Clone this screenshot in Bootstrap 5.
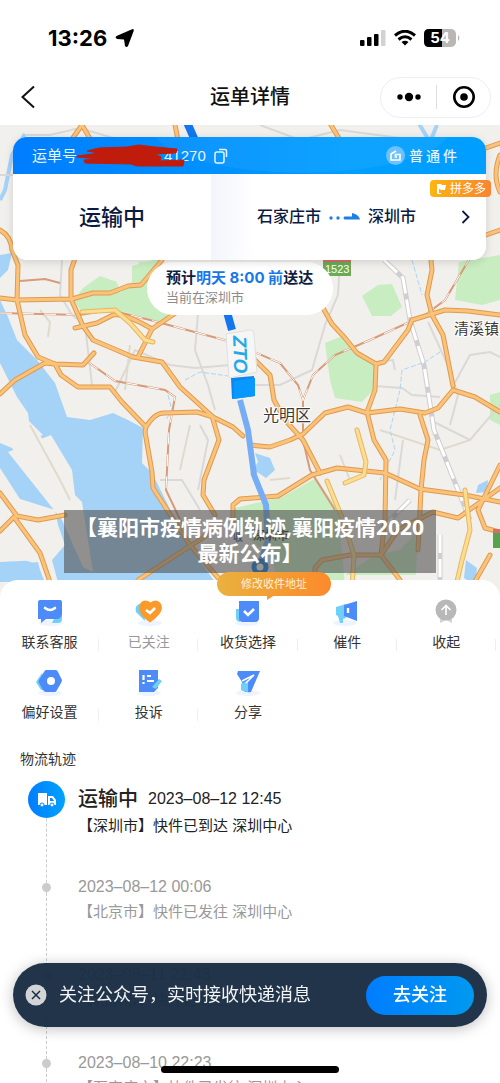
<!DOCTYPE html>
<html lang="zh-CN">
<head>
<meta charset="utf-8">
<meta name="viewport" content="width=device-width, initial-scale=1">
<title>运单详情</title>
<link href="https://cdn.jsdelivr.net/npm/bootstrap@5.3.0/dist/css/bootstrap.min.css" rel="stylesheet">
<style>
  body { font-family: "Liberation Sans", "Noto Sans CJK SC", sans-serif; color: #333; background: #fff; }
  svg { display: block; flex-shrink: 0; }
  .statusbar { height: 75px; padding: 0 40px 0 48px; }
  .clock { font: 700 22px/24px Inter, sans-serif; color: #000; }
  .navtop { height: 50px; padding: 0 9px 6px 20px; }
  .navtop h1 { font-size: 20px; line-height: 28px; font-weight: 500; color: #111; }
  .capsule { width: 111px; height: 41px; border: 1px solid #eee; border-radius: 21px; }
  .capsule .sep { width: 1px; height: 24px; background: #ddd; }
  .plain { background: none; border: 0; padding: 0; color: inherit; }

  .mapview { min-height: 471px; padding: 12px 14px 0 13px; background: #f2f0ec; overflow: hidden; }
  .mapview > svg { z-index: 0; }
  .waybill { border-radius: 14px; background: #fff; box-shadow: 0 2px 8px rgba(0,0,0,.14); z-index: 2; }
  .waybill-head { height: 37px; padding: 0 26px 0 19px; border-radius: 14px 14px 0 0; color: #e4f3ff; font-size: 15px; line-height: 20px;
    background: radial-gradient(ellipse 150px 44px at 61% -8px, rgba(255,255,255,.05) 98%, transparent), linear-gradient(90deg, #007dff, #009eff 70%); }
  .redacted { width: 87px; height: 24px; overflow: visible; z-index: 1; }
  .kind { font-size: 14px; font-weight: 500; letter-spacing: 3px; }
  .waybill-body { height: 86px; color: #0c1a40; }
  .state { width: 198px; font-size: 22px; font-weight: 500; }
  .route { font-size: 16px; font-weight: 500; padding: 0 16px 0 46px; background: linear-gradient(90deg, #f3f5fb, #fff 44px); border-radius: 0 0 14px 0; }
  .source { top: 43px; right: -5px; height: 17px; padding: 0 5px 0 6px; border-radius: 4px; font-size: 12px; color: #fff; background: linear-gradient(90deg, #fdb50e, #f98432); }
  .eta { width: 186px; margin: 2px 0 0 134px; padding: 5px 19px 8px; border-radius: 27px; background: #fff; z-index: 1; white-space: nowrap; color: #101d42; }
  .eta strong { font: 700 15px/22px Inter, "Noto Sans CJK SC", sans-serif; display: block; }
  .eta span { color: #1677e8; }
  .eta small { font-size: 13px; line-height: 18px; color: #8b8b8b; display: block; }
  .caption-box { top: 385px; width: 372px; padding: 4px 0 7px; background: rgba(85,85,85,.62); color: #fff; font: 700 21px/26px "Open Sans", "Noto Sans CJK SC", sans-serif; z-index: 3; white-space: nowrap; }

  .sheet { margin-top: -16px; border-radius: 18px 18px 0 0; background: #fff; z-index: 4; }
  .fixaddr { top: -8px; left: 217px; width: 114px; height: 24px; border-radius: 12px; background: linear-gradient(90deg, #eab13d, #fb8a2c); color: #fff0d8; font-size: 11px; }
  .fixaddr svg { left: 50px; top: 23px; }
  .actions { padding: 18px 4px 0 0; }
  .action { height: 70px; font-size: 14px; line-height: 20px; color: #333; text-decoration: none; }
  .action::after { content: ""; position: absolute; right: 0; top: 41px; height: 12px; width: 1px; background: #eee; }
  .action:last-child::after { display: none; }
  .action svg { margin-bottom: 6px; }
  .off { color: #999; }
  .trail-title { font-size: 14px; line-height: 20px; margin: 11px 20px 15px; font-weight: 400; }

  .trail { margin: 0; padding: 0 0 0 78px; }
  .trail li { height: 88px; color: #999; }
  .trail li::before { content: ""; position: absolute; left: -32px; top: 19px; bottom: -19px; border-left: 1px dashed #ccc; }
  .trail time { font-size: 16px; line-height: 26px; display: inline-block; }
  .trail p { font-size: 15px; line-height: 24px; margin: 0; white-space: nowrap; }
  .trail .now { color: #222; height: 90px; }
  .trail .now h3 { font-size: 20px; line-height: 30px; font-weight: 500; margin: 0 10px 0 0; }
  .trail .now time { line-height: 30px; }
  .truck { left: -50px; top: -3px; width: 37px; height: 37px; border-radius: 50%; background: linear-gradient(90deg, #007dff, #00a2ff); }
  .spot { left: -36px; top: 9px; width: 9px; height: 9px; border-radius: 50%; background: #ccc; }

  .follow { left: 13px; right: 13px; bottom: 56px; height: 64px; padding: 0 13px 0 12px; border-radius: 32px; background: rgba(24,44,67,.96); color: #f2f4f6; box-shadow: 0 2px 14px rgba(0,0,0,.25); z-index: 10; }
  .follow p { font-size: 18px; line-height: 24px; white-space: nowrap; margin: 0 0 0 12px; }
  .go { width: 108px; height: 39px; border: 0; border-radius: 20px; color: #fff; font-size: 18px; font-weight: 500; background: linear-gradient(90deg, #007dff, #0099ef); }
  .homebar { bottom: 10px; width: 178px; height: 7px; border-radius: 4px; background: #000; z-index: 11; }
</style>
</head>
<body>
<div class="vh-100 d-flex flex-column overflow-hidden">
  <div class="statusbar d-flex align-items-center flex-shrink-0">
    <span class="clock">13:26</span>
    <svg class="ms-2" width="20" height="20" viewBox="0 0 20 20"><path d="M1.500 8 16.500 1.500Q19.500 0 18.500 3.500L13 18Q11.500 20 10 18L9 11.500 2 11Q-.5 9.500 1.500 8Z"/></svg>
    <svg class="ms-auto" width="26" height="16" viewBox="0 0 26 16"><rect x="0" y="10" width="4.500" height="6" rx="1"/><rect x="7" y="7" width="4.500" height="9" rx="1"/><rect x="14" y="4" width="4.500" height="12" rx="1"/><rect x="21" width="4.500" height="16" rx="1" fill="#d2d2d2"/></svg>
    <svg class="ms-2" width="22" height="16" viewBox="0 0 22 16" fill="none" stroke="#000" stroke-width="3"><path d="M1 5.500Q11-3 21 5.500M4.500 9.500Q11 4 17.500 9.500"/><path d="M7.500 12Q11 9.500 14.500 12L11 15.500Z" fill="#000" stroke="none"/></svg>
    <svg class="ms-2" width="36" height="18" viewBox="0 0 36 18"><rect width="32" height="18" rx="5" fill="#b7b7b7"/><path d="M5 0H18V18H5Q0 18 0 13V5Q0 0 5 0Z"/><path d="M34 6Q37 9 34 12Z" fill="#b7b7b7"/><text x="16" y="14" text-anchor="middle" font-family="Inter" font-weight="700" font-size="15" fill="#fff">54</text></svg>
  </div>

  <header class="navtop d-flex align-items-center flex-shrink-0 position-relative">
    <button class="plain" aria-label="返回"><svg width="16" height="24" viewBox="0 0 16 24" fill="none" stroke="#111" stroke-width="2"><path d="M14 1.500 2.500 12 14 22.500"/></svg></button>
    <h1 class="m-0 position-absolute start-50 translate-middle-x">运单详情</h1>
    <div class="capsule ms-auto d-flex align-items-center">
      <button class="plain flex-fill d-flex justify-content-center" aria-label="更多"><svg width="26" height="10" viewBox="0 0 26 10"><circle cx="4" cy="5" r="2.700"/><circle cx="13" cy="5" r="4.200"/><circle cx="22" cy="5" r="2.700"/></svg></button>
      <span class="sep"></span>
      <button class="plain flex-fill d-flex justify-content-center" aria-label="关闭"><svg width="24" height="24" viewBox="0 0 24 24"><circle cx="12" cy="12" r="9.700" fill="none" stroke="#000" stroke-width="2.600"/><circle cx="12" cy="12" r="3.800"/></svg></button>
    </div>
  </header>

  <section class="mapview position-relative flex-shrink-0">
    <svg class="position-absolute top-0 start-0 w-100 h-100" viewBox="0 125 500 471" preserveAspectRatio="xMidYMin slice">
      <defs>
        <g id="roads" fill="none" stroke-linejoin="round" stroke-linecap="round">
          <path d="M0 298 17 300 72 299 93 293H110L128 286 141 285 162 260M0 230Q11 236 12 250L18 265 17 300 25 335 38 357 55 364 83 365 94 353M78 250 71 270V299L83 326 93 340 133 357 162 362 180 387 212 416 219 440 204 480 203 495 215 515"/>
          <path d="M0 394 15 380 45 363 55 364 61 375 78 387H110L122 402 146 427 145 432 152 472 153 488 190 545 220 580M75 328 97 323 113 315Q125 313 152 329L180 310M152 329 138 357M146 427Q155 412 165 413L197 412 213 417 233 427 243 436"/>
          <path d="M0 493 17 516 38 520 65 515M14 517 0 531M14 517 40 553 50 582M138 580 187 548 215 530M233 520V505L240 499 278 496 312 475 337 468 385 473 420 489 465 495 500 502"/>
          <path d="M323 308 332 324 345 338 357 353 376 364 375 390 367 412 374 440 386 460 385 520 381 555M376 364 384 362 408 330 412 320 432 314 445 310 468 311 500 315M430 250 432 270 427 295 432 315 443 335 453 386"/>
          <path d="M303 434 325 413 348 407 367 413 400 409 425 413 438 408 453 390 475 397 500 412M245 350 270 375 274 400 285 420 303 440 320 473M250 445 270 447 290 440 303 434M420 415 428 440 424 460 421 490 418 550"/>
          <path d="M433 512 458 518 500 488M500 465 478 510 485 528 500 532M315 590V568L322 560 350 555 381 555 400 580M381 555 398 530 433 512M82 125 70 142M82 125 92 142M174 120 178 140M328 120 340 140M486 148 500 143M500 155Q492 175 500 192M486 235 500 230M470 590 490 555"/>
        </g>
        <path id="lanes" fill="none" stroke-linejoin="round" stroke-linecap="round" d="M82 312 115 310 130 323 145 340 153 342M357 430 366 462 364 475 345 483M327 481 343 520 354 555 352 590M465 490 470 530 462 560 455 590"/>
      </defs>
      <g fill="#a5d3f7">
        <path d="M0 255 12 253 8 270 0 278ZM0 300 8 317 17 340 37 360 55 383 67 417 90 420 113 413 128 420 143 428 142 463 152 473 187 543 215 582H0V562L40 560 32 535 18 520 0 500V443L12 448 32 475 60 500 72 502 75 495 40 435 30 428 28 413 17 397 0 363Z"/>
        <path d="M255 453 270 458 275 470 266 478 257 472 250 475 258 462ZM478 485 488 480 487 492 476 493ZM302 537 320 534 322 545 311 552 299 547ZM466 560 477 568 475 585 464 578ZM355 377 368 376 370 382 360 386Z"/>
        <path d="M25 134 12 155 5 190 0 200M418 122 430 142 437 125" fill="none" stroke="#a5d3f7" stroke-width="4"/>
      </g>
      <path d="M0 420H28L43 435 12 444 0 440ZM8 452 51 435 72 470 75 495 82 502 93 572 83 567 62 520 50 505ZM0 468 20 499 55 510 58 525 65 545 52 560 60 590H48L38 565 0 550Z" fill="#f2f0ec"/>
      <path d="M0 566 38 562 42 580H0Z" fill="#a5d3f7"/>
      <path fill="#c8edc0" d="M74 300 83 288 100 276 117 282 120 293 132 282 132 266 160 258 150 285 180 310 160 322 125 312 80 310ZM362 296 378 285 392 284 402 307 391 316 372 316ZM325 343 345 335 355 353 376 364 374 389 362 402 335 398 330 380ZM459 262 500 255V300L482 305 455 300ZM282 497 316 478 338 510 345 585 280 585 270 555 250 540 233 520 235 508ZM345 575 375 555 400 550 418 530 416 575ZM490 395 500 392V425L490 420ZM138 262 155 261 148 275Z"/>
      <g fill="none" stroke="#dad9d8" stroke-width="2">
        <path d="M62 260 60 295 72 315 85 325M85 325 92 385M115 392 135 350 170 365 195 368 230 365 240 360M200 290 195 350 208 385 215 410M340 260 338 295 325 325 312 370 280 385H250M375 362 393 360 395 370M375 386 402 388 412 395 440 397M453 386 470 355 490 352 500 357M428 322 450 370 458 395 450 425M200 425 208 440 198 490M160 480H182L200 510M403 440 395 500M500 405 470 440 430 420M25 135H50L80 128 120 140M260 125 300 140 340 130 400 138M0 175H13"/>
        <path d="M48 337 50 322 40 310M30 425 60 480 70 500M130 345 125 390M190 425 180 470M340 455 350 480M380 430 440 450 470 440M270 480 290 478" stroke="#dfdbcc"/>
      </g>
      <g fill="none">
        <g stroke="#d89a78" stroke-width="2"><path id="rail" d="M0 313 80 315 110 310 150 320 228 341M250 350 280 363 298 385 303 400V432M303 400 313 375 335 355 370 340 425 315 445 300 470 258M88 362 115 381 165 390 175 397 169 430 166 490 185 530M303 440 310 470 335 510M20 281 45 279 60 283"/></g>
        <path d="M0 313 80 315 110 310 150 320 228 341M250 350 280 363 298 385 303 400V432M303 400 313 375 335 355 370 340 425 315 445 300 470 258M88 362 115 381 165 390 175 397 169 430 166 490" stroke="#fff" stroke-width="1" stroke-dasharray="12 10"/>
        <path d="M384 260 403 278 410 320 424 365 434 430 448 465 470 520M440 535V580M380 530 410 500" stroke="#cfcfd1" stroke-width="5"/>
        <path d="M384 260 403 278 410 320 424 365 434 430 448 465 470 520M440 535V580M380 530 410 500" stroke="#fff" stroke-width="3" stroke-dasharray="18 6"/>
        <path d="M185 380 200 372 228 376M168 395 172 410 166 420M412 260 422 295M440 352 425 362 402 370 400 390 390 430 395 450 380 480" stroke="#a9d5f5" stroke-dasharray="5 2"/>
      </g>
      <use href="#roads" stroke="#df9a50" stroke-width="5"/>
      <use href="#roads" stroke="#fbc37a" stroke-width="3"/>
      <use href="#lanes" stroke="#e3b765" stroke-width="5"/>
      <use href="#lanes" stroke="#ffdd90" stroke-width="3"/>
      <path d="M240 400 248 430 254 475 266 505 268 540 260 565" fill="none" stroke="#76adf4" stroke-width="6"/>
      <path d="M186 120 197 145M227 312 232 330" fill="none" stroke="#1276ee" stroke-width="8"/>
      <circle cx="260" cy="567" r="6" fill="#fff" stroke="#0875da" stroke-width="5"/>
      <path d="M323 261H351V276H323Z" fill="#6bab55"/><path d="M323 259H351V262H323Z" fill="#d86d69"/>
      <path d="M493 532H500V548H493Z" fill="#55a34d"/><path d="M493 529H500V533H493Z" fill="#d86d69"/>
      <g font-family="Noto Sans CJK SC" fill="#3a3a3a" stroke="#fff" stroke-width="2" paint-order="stroke">
        <text x="325" y="273" font-family="Liberation Sans" font-size="11" fill="#fff" stroke="none">1523</text>
        <text x="263" y="421" font-size="16">光明区</text>
        <text x="454" y="334" font-size="15">清溪镇</text>
        <text x="253" y="540" font-size="12" font-weight="500" stroke="none" fill="#222">深圳市</text>
        <text x="233" y="541" font-size="10" font-weight="700" stroke="none" fill="#1758a0">收</text>
      </g>
      <path d="M231 378 254 376 255 396 232 399Z" fill="#0d87f0"/><path d="M234 381V399L255 396V378Z" fill="#0898ff"/>
      <path d="M226 334 250 330Q254 330 254 334L257 372 229 378Z" fill="#f6f6f6" stroke="#e0e0e0"/>
      <text transform="translate(233 336) rotate(88)" font-family="Liberation Sans" font-weight="700" font-style="italic" font-size="19" fill="#25a9e6">ZTO</text>
    </svg>

    <article class="waybill position-relative">
      <div class="waybill-head d-flex align-items-center">
        <span>运单号</span>
        <svg class="redacted position-relative" width="87" height="24" viewBox="0 0 87 24"><path d="M0 12 22 9 10 7 22 4 50 3 62 1 78 3 100 5 99 9 78 10 84 13 83 17 107 16 106 22 60 22 54 20 8 19 7 16 22 15 0 13Z" fill="#bf1c0b" stroke="#bf1c0b" stroke-width="1" stroke-linejoin="round"/></svg>
        <span>41270</span>
        <button class="plain ms-2" aria-label="复制"><svg width="14" height="16" viewBox="0 0 14 16" fill="none" stroke="#e4f3ff" stroke-width="1.500"><rect x="1" y="4" width="9" height="11" rx="2"/><path d="M5 1.500H11Q12.500 1.500 12.500 3V9"/></svg></button>
        <svg class="ms-auto me-1" width="19" height="19" viewBox="0 0 19 19"><circle cx="9.500" cy="9.500" r="9.500" fill="#6cc2ff"/><path d="M10 5 5 8V14H14V8.500H9.500V11H11" fill="none" stroke="#fff" stroke-width="1.600"/></svg>
        <span class="kind">普通件</span>
      </div>
      <div class="waybill-body d-flex">
        <div class="state d-flex align-items-center justify-content-center">运输中</div>
        <a href="#route" class="route flex-fill d-flex align-items-center text-reset text-decoration-none">
          <span>石家庄市</span>
          <svg class="mx-2" width="31" height="12" viewBox="0 0 31 12" fill="#1d7fe6"><circle cx="2" cy="7" r="1.700"/><circle cx="9" cy="7" r="1.700"/><path d="M15.500 5.500H23V2Q30 3.500 31 8.500H15.500Q13.500 7 15.500 5.500Z"/></svg>
          <span class="me-auto">深圳市</span>
          <svg width="9" height="14" viewBox="0 0 9 14" fill="none" stroke="#0c1a40" stroke-width="1.800"><path d="M1.500 1 7.500 7 1.500 13"/></svg>
        </a>
      </div>
      <span class="source position-absolute d-flex align-items-center"><svg class="me-1" width="10" height="10" viewBox="0 0 10 10" fill="#fff"><path d="M1 0H5L6 1H10L9 6H5L4 5H3V9H5V10H1Z"/></svg>拼多多</span>
    </article>
    <div class="eta position-relative"><strong>预计<span>明天 8:00 前</span>送达</strong><small>当前在深圳市</small></div>
    <div class="caption-box position-absolute start-50 translate-middle-x text-center">【襄阳市疫情病例轨迹,襄阳疫情2020<br>最新公布】</div>
  </section>

  <main class="sheet position-relative flex-fill">
    <div class="fixaddr position-absolute d-flex align-items-center justify-content-center">修改收件地址<svg class="position-absolute" width="8" height="5" viewBox="0 0 8 5"><path d="M0 0H8L0 5Z" fill="#f5993a"/></svg></div>
    <nav class="actions row row-cols-5 g-0">
      <a href="#service" class="action col position-relative d-flex flex-column align-items-center"><svg width="28" height="28" viewBox="0 0 28 28"><ellipse cx="15" cy="25" rx="12" ry="3" fill="#edf3ff"/><path d="M22 12H26V21Q26 25 22 25H16Z" fill="#6fd0f7"/><path d="M4 2H24Q26 2 26 4V16Q25 21 21 21H10L5 25V21H2V4Q2 2 4 2Z" fill="#4c8bf8"/><path d="M9 10Q14 14 19 10" fill="none" stroke="#fff" stroke-width="2.600" stroke-linecap="round"/></svg>联系客服</a>
      <a href="#followed" class="action off col position-relative d-flex flex-column align-items-center"><svg width="28" height="28" viewBox="0 0 28 28"><ellipse cx="15" cy="25" rx="12" ry="3" fill="#edf3ff"/><path d="M8 5Q-1 6 1 14L10 23Z" fill="#6fd0f7"/><path d="M15 24.500Q4 17 4 10 5 2.500 10 2.500 13 2.500 15.500 4.500 18 2.500 21 2.500 27 4 27 10 26 17 15 24.500Z" fill="#fb9a28"/><path d="M11 12 15 15 20 10" fill="none" stroke="#fff" stroke-width="2.600"/></svg>已关注</a>
      <a href="#receive" class="action col position-relative d-flex flex-column align-items-center"><svg width="28" height="28" viewBox="0 0 28 28"><ellipse cx="13" cy="25" rx="12" ry="3" fill="#edf3ff"/><path d="M2 11H6V24Q2 23 2 20Z" fill="#6fd0f7"/><path d="M5 3H25V20Q25 24 21 24H9Q5 24 5 20Z" fill="#4c8bf8"/><path d="M10 13 14 17 20 11" fill="none" stroke="#fff" stroke-width="2.600"/></svg>收货选择</a>
      <a href="#urge" class="action col position-relative d-flex flex-column align-items-center"><svg width="28" height="28" viewBox="0 0 28 28"><ellipse cx="12" cy="25" rx="12" ry="3" fill="#edf3ff"/><path d="M3 9 13 6V20L10 21V25H7L5 18 3 17Z" fill="#6fd0f7"/><path d="M11 7 24 3V23L11 18Z" fill="#4c8bf8"/><path d="M15 10V15" stroke="#fff" stroke-width="2.400"/></svg>催件</a>
      <a href="#collapse" class="action col position-relative d-flex flex-column align-items-center"><svg width="28" height="28" viewBox="0 0 28 28"><path d="M8 18H20V25L14 22 8 25Z" fill="#d4d4d4"/><circle cx="14" cy="12" r="10.500" fill="#b8b8b8"/><path d="M14 17V8M9.500 12 14 7.500 18.500 12" fill="none" stroke="#fff" stroke-width="1.600"/></svg>收起</a>
      <a href="#prefs" class="action col position-relative d-flex flex-column align-items-center"><svg width="28" height="28" viewBox="0 0 28 28"><ellipse cx="14" cy="25" rx="12" ry="3" fill="#edf3ff"/><path d="M6 5 0 14 5 22H12Z" fill="#6fd0f7"/><path d="M10 2H20Q21 2 22 4L26 12Q26 13 25 15L21 22Q20 24 19 24H10Q8 24 7 22L3 15Q2 13 3 12L8 4Q9 2 10 2Z" fill="#4c8bf8"/><circle cx="15" cy="13" r="4" fill="#fff"/></svg>偏好设置</a>
      <a href="#complaint" class="action col position-relative d-flex flex-column align-items-center"><svg width="28" height="28" viewBox="0 0 28 28"><ellipse cx="14" cy="25" rx="12" ry="3" fill="#edf3ff"/><path d="M4 2H23V20L19 24H4Z" fill="#4c8bf8"/><path d="M8.500 7V12M8.500 14V16M12 8H16M12 13H19" stroke="#fff" stroke-width="2.200"/><path d="M17 19 24 11 27 13 21 21Z" fill="#6fd0f7"/></svg>投诉</a>
      <a href="#share" class="action col position-relative d-flex flex-column align-items-center"><svg width="28" height="28" viewBox="0 0 28 28"><ellipse cx="14" cy="25" rx="12" ry="3" fill="#edf3ff"/><path d="M4 3H26L17 24Q12 25 8 22V14L3 6Z" fill="#4c8bf8"/><path d="M7 16 14 12V24L7 22Z" fill="#6fd0f7"/><path d="M8 13 20 7 12 15" fill="none" stroke="#fff" stroke-width="1.600"/></svg>分享</a>
    </nav>
    <h2 class="trail-title">物流轨迹</h2>
    <ul class="trail list-unstyled">
      <li class="now position-relative">
        <span class="truck position-absolute d-flex align-items-center justify-content-center"><svg width="20" height="14" viewBox="0 0 20 14" fill="#fff"><path d="M1 0H10V12H1ZM11 3H16L19 7V12H11Z"/><path d="M13 5H15L17 8H13Z" fill="#058bff"/><circle cx="5" cy="12" r="2" stroke="#058bff"/><circle cx="15" cy="12" r="2" stroke="#058bff"/></svg></span>
        <div class="d-flex align-items-center"><h3>运输中</h3><time>2023–08–12 12:45</time></div>
        <p>【深圳市】快件已到达 深圳中心</p>
      </li>
      <li class="position-relative"><i class="spot position-absolute"></i><time>2023–08–12 00:06</time><p>【北京市】快件已发往 深圳中心</p></li>
      <li class="position-relative"><i class="spot position-absolute"></i><time>2023–08–11 22:43</time><p>【北京市】快件已到达 北京</p></li>
      <li class="position-relative"><i class="spot position-absolute"></i><time>2023–08–10 22:23</time><p>【石家庄市】快件已发往 深圳中心</p></li>
    </ul>
  </main>
</div>

<aside class="follow position-fixed d-flex align-items-center">
  <button class="plain" aria-label="关闭提示"><svg width="22" height="22" viewBox="0 0 22 22"><circle cx="11" cy="11" r="10.500" fill="#d2d4d6"/><path d="M7 7 15 15M15 7 7 15" stroke="#182c43" stroke-width="1.500"/></svg></button>
  <p class="me-auto">关注公众号，实时接收快递消息</p>
  <button class="go">去关注</button>
</aside>
<div class="homebar position-fixed start-50 translate-middle-x"></div>
<script src="https://cdn.jsdelivr.net/npm/bootstrap@5.3.0/dist/js/bootstrap.bundle.min.js"></script>
</body>
</html>
